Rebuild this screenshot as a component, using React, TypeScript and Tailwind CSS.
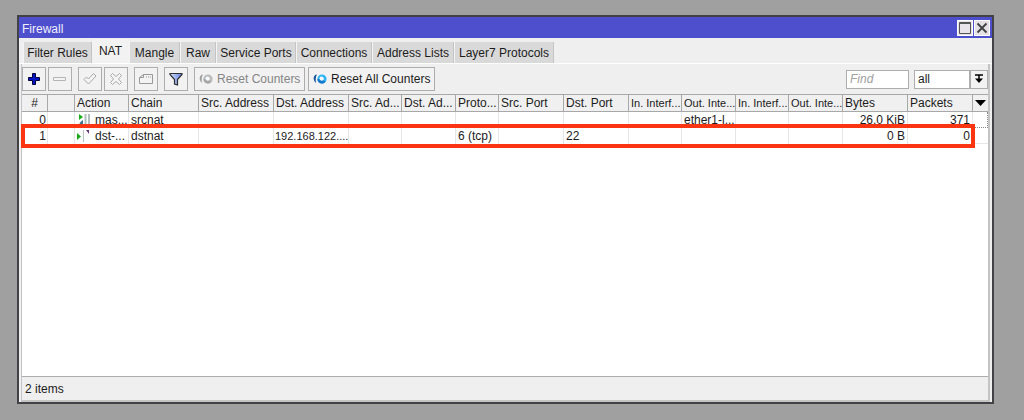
import React from "react";

const tabs = [
  { name: "Filter Rules", width: "w-[69px]" },
  { name: "NAT", width: "w-[37px]" },
  { name: "Mangle", width: "w-[51px]" },
  { name: "Raw", width: "w-9" },
  { name: "Service Ports", width: "w-20" },
  { name: "Connections", width: "w-[76px]" },
  { name: "Address Lists", width: "w-[82px]" },
  { name: "Layer7 Protocols", width: "w-[100px]" },
];

const columns = [
  { label: "#", width: "w-[26px]" },
  { label: "", width: "w-[27px]" },
  { label: "Action", width: "w-[54px]" },
  { label: "Chain", width: "w-[70px]" },
  { label: "Src. Address", width: "w-[75px]" },
  { label: "Dst. Address", width: "w-[75px]" },
  { label: "Src. Ad...", width: "w-[53px]" },
  { label: "Dst. Ad...", width: "w-[54px]" },
  { label: "Proto...", width: "w-[43px]" },
  { label: "Src. Port", width: "w-[65px]" },
  { label: "Dst. Port", width: "w-[65px]" },
  { label: "In. Interf...", width: "w-[53px]", compact: true },
  { label: "Out. Inte...", width: "w-[54px]", compact: true },
  { label: "In. Interf...", width: "w-[53px]", compact: true },
  { label: "Out. Inte...", width: "w-[54px]", compact: true },
  { label: "Bytes", width: "w-[65px]" },
  { label: "Packets", width: "w-[65px]" },
];

const rows = [
  ["0", "", "mas...", "srcnat", "", "", "", "", "", "", "", "", "ether1-l...", "", "", "26.0 KiB", "371"],
  ["1", "", "dst-...", "dstnat", "", "192.168.122....", "", "", "6 (tcp)", "", "22", "", "", "", "", "0 B", "0"],
];

function PlusIcon() {
  return (
    <svg width="14" height="14" viewBox="0 0 14 14" aria-hidden="true">
      <path d="M5.5 1.5h3v4h4v3h-4v4h-3v-4h-4v-3h4z" fill="#0714c4" stroke="#00003c" />
    </svg>
  );
}

function MinusIcon() {
  return (
    <svg width="14" height="14" viewBox="0 0 14 14" aria-hidden="true">
      <path d="M.5 5.500h12v3H.5z" fill="#f4f4f4" stroke="#b4b4b4" />
    </svg>
  );
}

function CheckIcon() {
  return (
    <svg width="14" height="14" viewBox="0 0 14 14" aria-hidden="true">
      <path d="M1 7.500 3.500 5 5.500 7 10.500 1.500 13 4 5.500 12z" fill="#f4f4f4" stroke="#a8a8a8" />
    </svg>
  );
}

function CrossIcon() {
  return (
    <svg width="14" height="14" viewBox="0 0 14 14" aria-hidden="true">
      <path
        d="M3.500 1.500 7 4.500 10.500 1.500 12.500 3.500 9.500 7 12.500 10.500 10.500 12.500 7 9.500 3.500 12.500 1.500 10.500 4.500 7 1.500 3.500z"
        fill="#f4f4f4"
        stroke="#a8a8a8"
      />
    </svg>
  );
}

function CommentIcon() {
  return (
    <svg width="14" height="14" viewBox="0 0 14 14" aria-hidden="true">
      <path d="M4.500 2.500h9v9H.5v-6z" fill="#f3f3f3" stroke="#999" />
      <path d="M.5 5.500h4v-3M7 5h1m1 0h1m1 0h1" fill="none" stroke="#999" />
    </svg>
  );
}

function FilterIcon() {
  return (
    <svg width="14" height="14" viewBox="0 0 14 14" aria-hidden="true">
      <defs>
        <linearGradient id="funnel" x1="0" x2="1">
          <stop offset="0" stopColor="#d4e2ff" />
          <stop offset="1" stopColor="#6480dc" />
        </linearGradient>
      </defs>
      <path d="M1 1.500h12v1L8.500 7.500v5.500L5.500 12V7.500L1 2.500z" fill="url(#funnel)" stroke="#303030" strokeWidth="1.200" />
    </svg>
  );
}

function ResetIcon({ muted = false }: { muted?: boolean }) {
  const dark = muted ? "#a0a0a0" : "#17549c";
  const mid = muted ? "#a8a8a8" : "#1678cc";
  const light = muted ? "#bcbcbc" : "#2fb4f4";
  return (
    <svg width="14" height="10" viewBox="0 0 14 10" aria-hidden="true">
      <path d="M4 .5C0 .5-.5 6.500 3 9 2.500 6.500 2.500 3 4 .5z" fill={dark} />
      <circle cx="9" cy="5" r="3.200" fill="none" stroke={light} strokeWidth="2.800" />
      <path d="M5.800 5A3.200 3.200 0 0 0 11.500 7" fill="none" stroke={mid} strokeWidth="2.800" />
      <circle cx="8.500" cy="4.500" r="2" fill="#f4faff" />
    </svg>
  );
}

function ActionIcon({ kind }: { kind: string }) {
  if (kind === "mas...") {
    return (
      <svg width="14" height="14" viewBox="0 0 14 14" aria-hidden="true">
        <path d="M2 1v6l4-3z" fill="#18b018" />
        <path d="M6 7v6H2C2 10 4 8 6 7z" fill="#3d7897" />
        <path d="M8.500 1v12M12 1v12" stroke="#b4c0c0" strokeWidth="2" />
      </svg>
    );
  }
  return (
    <svg width="14" height="14" viewBox="0 0 14 14" aria-hidden="true">
      <path d="M0 4v7l4-3.500z" fill="#18a818" />
      <path d="M6.500 1v12" stroke="#b8c0c0" />
      <path d="M9 1h3v4z" fill="#633675" />
    </svg>
  );
}

function DropArrow() {
  return (
    <svg width="10" height="10" viewBox="0 0 10 10" aria-hidden="true">
      <path d="M1 1h8M5 1v5" stroke="#000" strokeWidth="1.500" />
      <path d="M1 4.500h8L5 9z" fill="#000" />
    </svg>
  );
}

function ToolButton({ label, disabled, children }: { label: string; disabled?: boolean; children: React.ReactNode }) {
  return (
    <button
      type="button"
      aria-label={label}
      disabled={disabled}
      className="flex h-6 w-6 items-center justify-center border border-[#adadad] bg-[#f2f2f2]"
    >
      {children}
    </button>
  );
}

function cellClass(index: number) {
  if (index === 0) return "pr-px text-right";
  if (index >= 15) return "pr-[2px] text-right";
  if (index === 5) return "pl-px text-left text-[11px]";
  return "pl-[2px] text-left";
}

export default function App() {
  return (
    <main className="flex min-h-screen bg-[#a0a0a0] pt-[15px] pr-[30px] pb-4 pl-[17px] font-['Liberation_Sans',Arial,sans-serif] text-xs leading-4 text-[#1c1c1c]">
      <section aria-label="Firewall" className="flex min-w-0 grow flex-col border-2 border-[#424246] bg-[#efefef]">
        <header className="flex h-[21px] shrink-0 items-center justify-between bg-[#4e4fcc] pr-[2px] pl-[3px]">
          <h1 className="pt-[2px] text-[#f0f0ff]">Firewall</h1>
          <div className="flex gap-px">
            <button type="button" aria-label="Maximize" className="flex h-4 w-4 items-center justify-center border border-white bg-[#e4e0e4]">
              <svg width="12" height="12" viewBox="0 0 12 12" aria-hidden="true">
                <path d="M.5.5h11v11H.5z" fill="#e9e4e9" stroke="#555" />
                <path d="M1 1.500h10" stroke="#555" />
              </svg>
            </button>
            <button type="button" aria-label="Close" className="flex h-4 w-4 items-center justify-center border border-white bg-[#e4e0e4]">
              <svg width="12" height="12" viewBox="0 0 12 12" aria-hidden="true">
                <path d="m1.500 1.500 9 9m0-9-9 9" stroke="#404040" strokeWidth="1.800" />
              </svg>
            </button>
          </div>
        </header>

        <div role="tablist" className="flex h-[26px] shrink-0 items-end border-b border-white pl-1">
          {tabs.map((tab) => {
            const active = tab.name === "NAT";
            return (
              <button
                key={tab.name}
                type="button"
                role="tab"
                aria-selected={active}
                className={`${tab.width} shrink-0 whitespace-nowrap text-center ${
                  active
                    ? "h-6 bg-[#f2f2f2] pb-px"
                    : "h-[21px] border-r border-l border-r-[#c4c4c4] border-l-[#f4f4f4] bg-[#d9d9d9] pt-px"
                }`}
              >
                {tab.name}
              </button>
            );
          })}
        </div>

        <div className="mx-[2px] flex min-h-0 grow flex-col border-r-2 border-b-2 border-l border-[#c4c4c4]">
          <div className="flex h-[30px] shrink-0 items-center justify-between">
            <div className="flex items-center">
              <div className="flex gap-[2px]">
                <ToolButton label="Add"><PlusIcon /></ToolButton>
                <ToolButton label="Remove" disabled><MinusIcon /></ToolButton>
              </div>
              <div className="ml-[6px] flex gap-[2px]">
                <ToolButton label="Enable" disabled><CheckIcon /></ToolButton>
                <ToolButton label="Disable" disabled><CrossIcon /></ToolButton>
              </div>
              <div className="ml-[6px] flex gap-[6px]">
                <ToolButton label="Comment" disabled><CommentIcon /></ToolButton>
                <ToolButton label="Filter"><FilterIcon /></ToolButton>
              </div>
              <div className="ml-[6px] flex gap-[3px]">
                <button type="button" disabled className="flex h-6 w-[111px] items-center gap-1 whitespace-nowrap border border-[#adadad] bg-[#f2f2f2] pl-1 text-[#858585]">
                  <ResetIcon muted />
                  Reset Counters
                </button>
                <button type="button" className="flex h-6 w-[127px] items-center gap-1 whitespace-nowrap border border-[#adadad] bg-[#f2f2f2] pl-1">
                  <ResetIcon />
                  Reset All Counters
                </button>
              </div>
            </div>
            <div className="flex items-center">
              <input
                type="text"
                aria-label="Find"
                placeholder="Find"
                className="h-[19px] w-[63px] border border-[#adadad] bg-white pl-[3px] italic placeholder:text-[#a0a0a0]"
              />
              <select aria-label="Filter scope" className="ml-[5px] h-[19px] w-[56px] appearance-none border border-[#adadad] bg-white pl-[3px]">
                <option>all</option>
              </select>
              <button type="button" aria-label="Open scope list" className="flex h-[19px] w-[18px] items-center justify-center border border-[#adadad] bg-[#f2f2f2]">
                <DropArrow />
              </button>
            </div>
          </div>

          <div className="relative grow bg-white">
            <table className="w-full table-fixed border-separate border-spacing-0">
              <thead>
                <tr className="h-[18px] bg-[#f0f0f0]">
                  {columns.map((column, index) => (
                    <th
                      key={index}
                      scope="col"
                      className={`${column.width} whitespace-nowrap border-y border-r border-[#a8a8a8] p-0 font-normal ${
                        index === 0 ? "text-center" : "pl-[2px] text-left"
                      } ${column.compact ? "text-[11px]" : ""}`}
                    >
                      {column.label}
                    </th>
                  ))}
                  <th scope="col" className="border-y border-[#a8a8a8] p-0">
                    <button type="button" aria-label="Choose columns" className="mx-auto flex h-4 items-center">
                      <svg width="11" height="6" viewBox="0 0 11 6" aria-hidden="true">
                        <path d="M0 0h11L5.500 6z" fill="#000" />
                      </svg>
                    </button>
                  </th>
                </tr>
              </thead>
              <tbody>
                {rows.map((row, rowIndex) => (
                  <tr key={row[0]} className="h-4">
                    {row.map((value, index) => (
                      <td key={index} className={`whitespace-nowrap border-r border-[#e6e6e6] p-0 ${cellClass(index)}`}>
                        {index === 2 ? (
                          <span className="flex items-center">
                            <span className="flex w-[18px] shrink-0">
                              <ActionIcon kind={value} />
                            </span>
                            {value}
                          </span>
                        ) : (
                          value
                        )}
                      </td>
                    ))}
                    <td
                      className={`p-0 ${
                        rowIndex === 0 ? "border-r border-b border-dotted border-[#888]" : "border-b border-[#e6e6e6]"
                      }`}
                    />
                  </tr>
                ))}
              </tbody>
            </table>
            <div className="pointer-events-none absolute top-[30px] right-[13px] -left-px h-6 border-4 border-[#fb3512]" />
          </div>

          <footer className="flex h-6 shrink-0 items-center border-t border-[#adadad] pl-[3px]">2 items</footer>
        </div>
      </section>
    </main>
  );
}
